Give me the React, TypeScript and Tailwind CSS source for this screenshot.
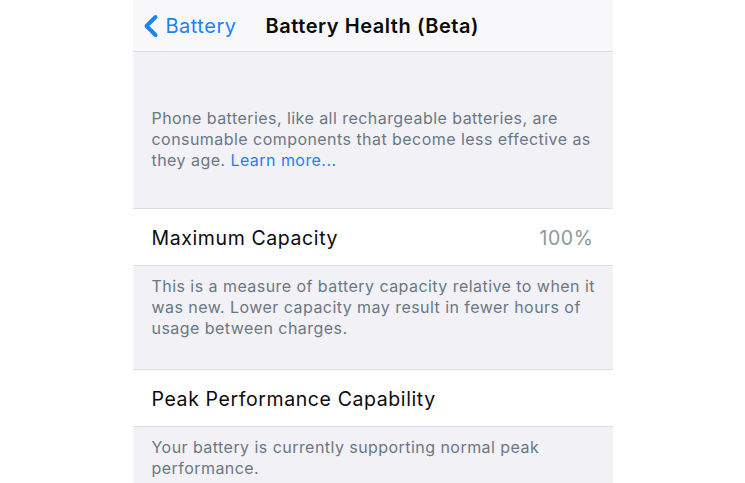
import { ChevronLeft } from "lucide-react";

const font = { fontFamily: "Inter, 'Liberation Sans', sans-serif" };

function Footer({ children, className = "" }: { children: React.ReactNode; className?: string }) {
  return (
    <p className={`pl-[19px] pr-[4px] text-[16px] leading-[21px] tracking-[0.45px] text-[#6b7883] ${className}`}>
      {children}
    </p>
  );
}

function Row({ label, value }: { label: string; value?: string }) {
  return (
    <div className="flex h-[58px] items-center justify-between border-y border-[#dedee3] bg-white px-[19px] pt-[4px]">
      <span className="text-[19.5px] tracking-[0.6px] text-[#0b0b0b]">{label}</span>
      {value && <span className="text-[19.5px] tracking-[0.6px] text-[#8a9a9a]">{value}</span>}
    </div>
  );
}

export default function App() {
  return (
    <div className="flex h-[483px] w-[745px] justify-center overflow-hidden bg-white" style={font}>
      <div className="flex w-[480px] flex-col bg-[#f1f1f6]">
        {/* nav bar */}
        <div className="flex h-[52px] shrink-0 items-center border-b border-[#dcdce1] bg-[#f8f8fa]">
          <div className="flex items-center text-[#1a82fb]">
            <ChevronLeft size={36} strokeWidth={2.6} className="-mr-[3px]" />
            <span className="text-[20px] tracking-[0.5px]">Battery</span>
          </div>
          <span className="ml-[29px] text-[20px] font-semibold tracking-[0.55px] text-[#0b0b0b]">
            Battery Health (Beta)
          </span>
        </div>

        <Footer className="pt-[56px] pb-[37px]">
          Phone batteries, like all rechargeable batteries, are
          <br />
          consumable components that become less effective as
          <br />
          they age. <span className="text-[#1a82fb]">Learn more...</span>
        </Footer>

        <Row label="Maximum Capacity" value="100%" />

        <Footer className="pt-[10px] pb-[30px]">
          This is a measure of battery capacity relative to when it
          <br />
          was new. Lower capacity may result in fewer hours of
          <br />
          usage between charges.
        </Footer>

        <Row label="Peak Performance Capability" />

        <Footer className="pt-[10px]">
          Your battery is currently supporting normal peak
          <br />
          performance.
        </Footer>
      </div>
    </div>
  );
}
